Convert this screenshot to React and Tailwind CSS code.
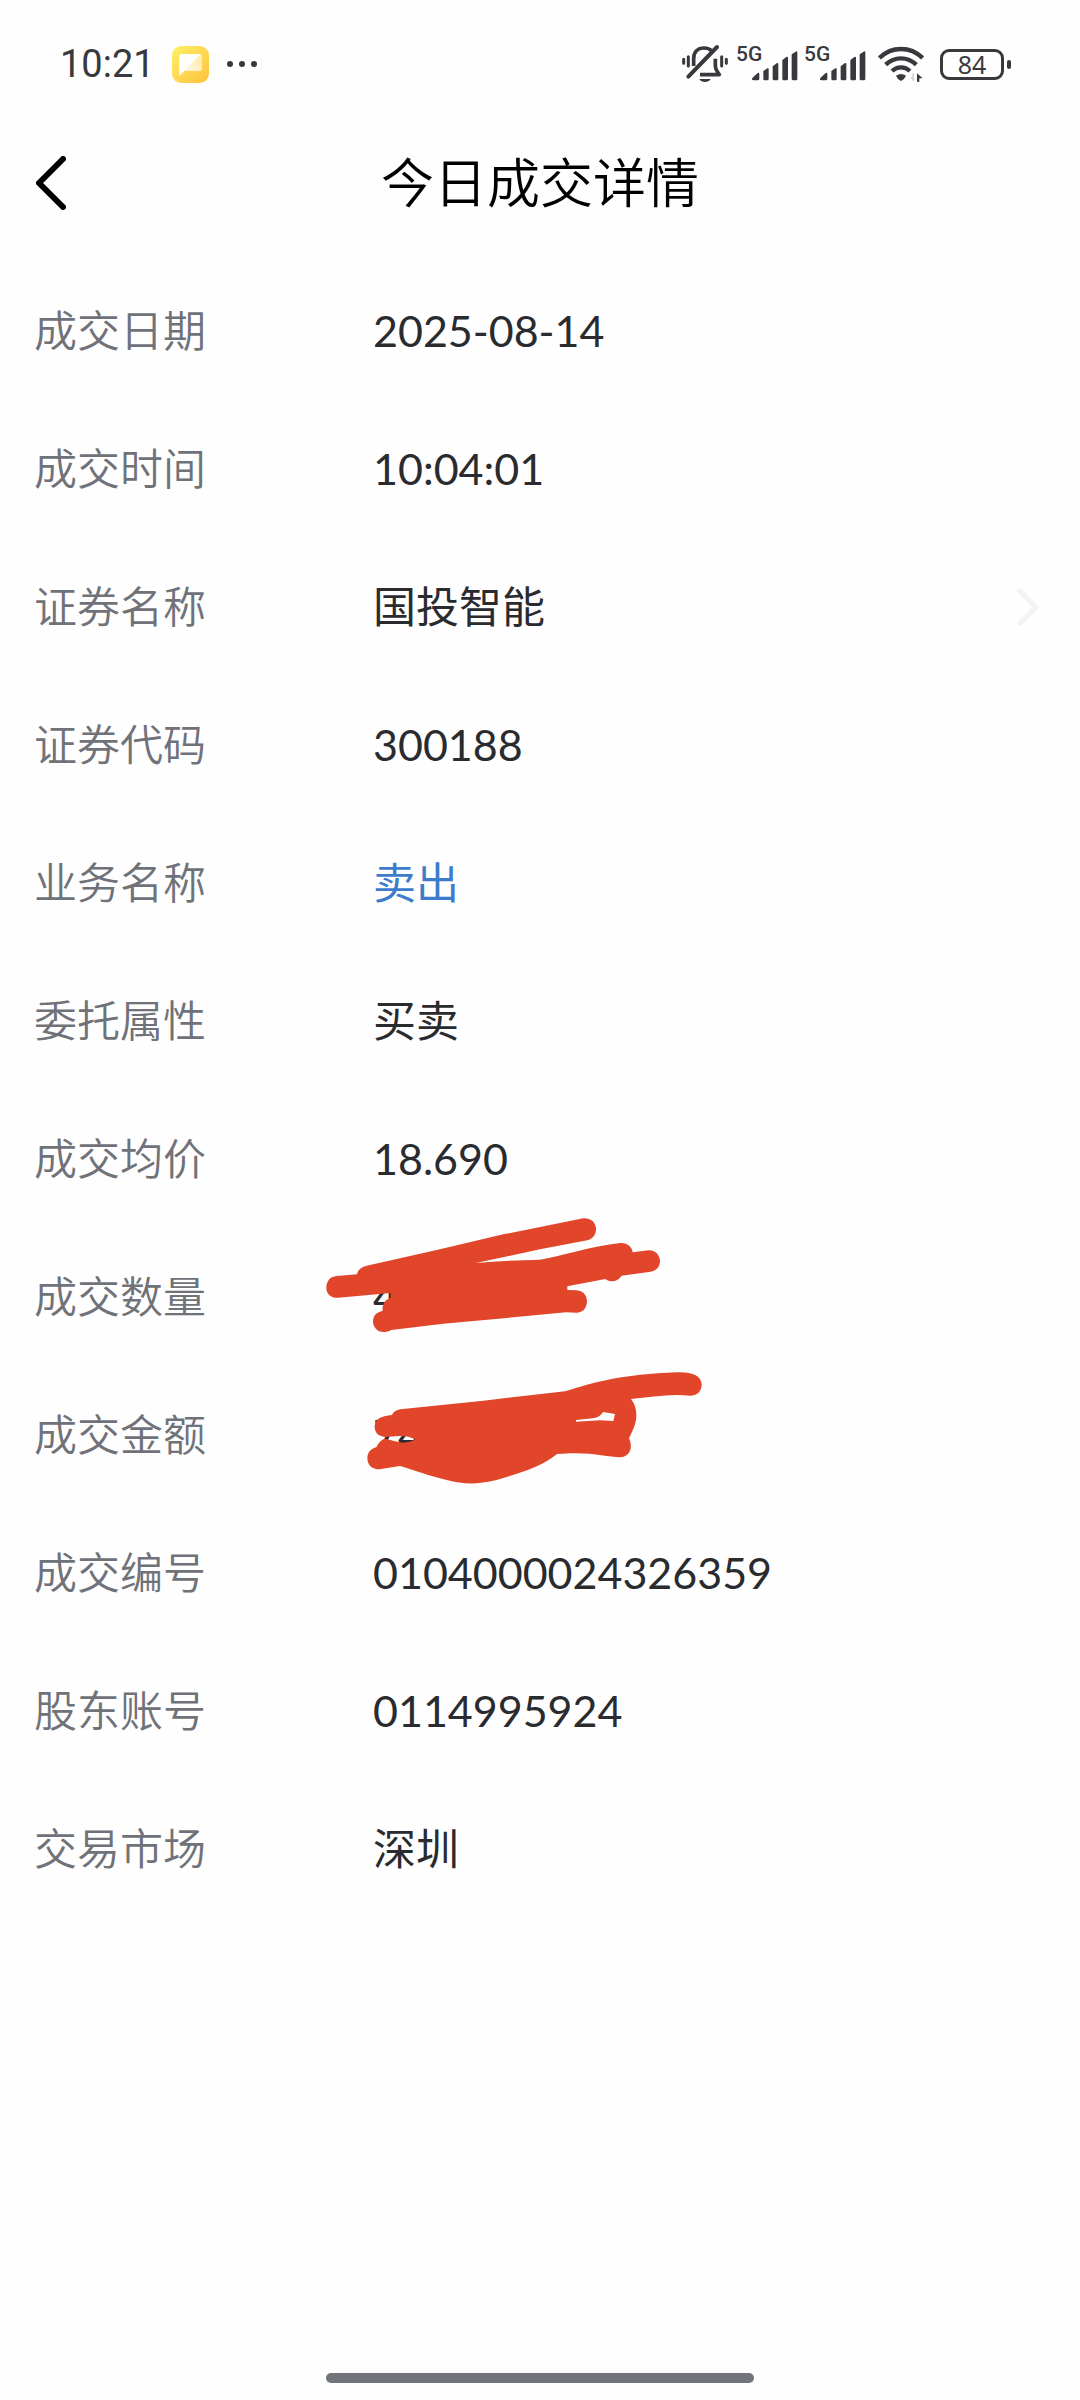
import React from "react";

const rows = [
  { label: "成交日期", value: "2025-08-14" },
  { label: "成交时间", value: "10:04:01" },
  { label: "证券名称", value: "国投智能", link: true },
  { label: "证券代码", value: "300188" },
  { label: "业务名称", value: "卖出", sell: true },
  { label: "委托属性", value: "买卖" },
  { label: "成交均价", value: "18.690" },
  { label: "成交数量", value: "4", mark: "quantity" },
  { label: "成交金额", value: "74", mark: "amount" },
  { label: "成交编号", value: "0104000024326359" },
  { label: "股东账号", value: "0114995924" },
  { label: "交易市场", value: "深圳" },
];

function MutedBell() {
  return (
    <svg width="46" height="40" viewBox="0 0 138 120" fill="none" stroke="#38393d" strokeLinecap="round" aria-label="静音">
      <path d="M35 66V45C35 24 47 12 66 12C76 12 84 15 89 21" strokeWidth="11" strokeLinecap="butt" />
      <path d="M100 44V64C100 75 104 82 112 92H54" strokeWidth="11" strokeLinejoin="round" strokeLinecap="butt" />
      <path d="M19 98L105 9" strokeWidth="12" />
      <path d="M5 46V58M19 38V66M119 38V66M133 46V58" strokeWidth="9" />
      <path d="M52 105H86C82 112 77 114 69 114S56 112 52 105Z" fill="#38393d" stroke="none" />
    </svg>
  );
}

function Signal() {
  return (
    <div className="relative">
      <span className="absolute left-0 top-0 text-[21px] leading-5 font-medium">5G</span>
      <svg width="62" height="40" viewBox="0 0 186 120" fill="#38393d" aria-label="信号">
        <path d="M49 102L65 87Q70 84 70 90V104Q70 109 65 109H53Q45 108 49 102Z" />
        <path d="M82 81L94 73Q98 71 98 76V105Q98 109 94 109H86Q82 109 82 105Z" />
        <path d="M110 67L122 58Q127 55 127 61V105Q127 109 123 109H114Q110 109 110 105Z" />
        <path d="M139 48L151 39Q156 36 156 42V105Q156 109 152 109H143Q139 109 139 105Z" />
        <path d="M167 31L179 23Q184 20 184 26V105Q184 109 180 109H171Q167 109 167 105Z" />
      </svg>
    </div>
  );
}

function Wifi() {
  return (
    <svg width="46" height="36" viewBox="0 0 138 108" fill="none" stroke="#38393d" strokeWidth="13" aria-label="无线网络">
      <path d="M4 36Q32 9 69 9T134 36" />
      <path d="M23 56Q43 37 69 37T115 56" />
      <path d="M42 75Q54 64 69 64T96 75" />
      <path d="M54 89Q69 79 84 89Q79 101 69 105Q59 101 54 89Z" fill="#38393d" stroke="none" />
      <path d="M108 82V107L96 94H103V82Z" fill="#d4d5d7" stroke="none" />
      <path d="M117 107V82L134 97H124V107Z" fill="#38393d" stroke="none" />
    </svg>
  );
}

function Battery() {
  return (
    <div className="flex items-center gap-[3px]">
      <div className="flex h-[31px] w-16 items-center justify-center rounded-[9px] border-[3px] border-[#38393d] font-['Noto_Sans',sans-serif] text-[25px] leading-6">
        84
      </div>
      <div className="h-[9px] w-1 rounded-sm bg-[#38393d]" />
    </div>
  );
}

function NoteIcon() {
  return (
    <svg width="37" height="37" viewBox="0 0 111 111" aria-hidden="true">
      <defs>
        <linearGradient id="note" x1="0" y1="0" x2="1" y2="1">
          <stop offset="0" stopColor="#fff066" />
          <stop offset="1" stopColor="#ffc13d" />
        </linearGradient>
        <linearGradient id="fold" x1="1" y1="0" x2="0.3" y2="1">
          <stop offset="0" stopColor="#fff" stopOpacity="0.45" />
          <stop offset="1" stopColor="#fff" stopOpacity="0.8" />
        </linearGradient>
      </defs>
      <rect width="111" height="111" rx="28" fill="url(#note)" />
      <path d="M27 24H88L22 90V29Q22 24 27 24Z" fill="#fff" />
      <path d="M88 24Q90 24 90 29V69Q90 75 84 75H37Z" fill="url(#fold)" />
    </svg>
  );
}

function Scribble({ kind }) {
  if (kind === "quantity") {
    return (
      <svg className="absolute -left-[63px] -top-7" width="400" height="150" viewBox="0 0 1200 450" fill="#e1462b" aria-hidden="true">
        <path d="M80 228L141 223Q144 203 170 197L380 150L580 103L820 55C846 53 860 72 858 91C856 108 846 117 832 121L690 148L497 189Q590 181 690 179C760 168 830 141 930 129C951 127 967 141 968 157L1015 151C1035 149 1050 165 1050 184C1049 203 1037 213 1022 215L935 227C921 248 900 247 886 237L772 259V270L800 271C821 273 831 287 831 305C830 325 818 337 800 338L768 337L590 354L400 371L244 390C220 403 193 396 189 367C188 346 200 337 218 332C216 312 225 299 242 293V279L85 293C62 295 48 280 49 261C50 242 61 230 80 228Z" />
      </svg>
    );
  }
  return (
    <svg className="absolute -left-[63px] -top-4" width="400" height="150" viewBox="0 450 1200 450" fill="#e1462b" fillRule="evenodd" aria-hidden="true">
      <path d="M246 645Q252 631 271 628L520 602L765 574C850 548 940 522 1100 517C1145 515 1175 527 1175 554C1174 575 1161 587 1140 587C1085 580 1020 591 963 597C978 615 981 638 978 661C974 682 965 697 957 715C969 740 962 770 930 772C890 770 835 753 741 762C695 801 620 822 560 840C500 854 460 853 410 840C355 827 310 810 270 798L208 808C187 808 172 796 172 774C173 756 183 746 199 742C204 729 213 720 224 716C245 720 255 724 270 727C285 730 302 726 316 718C300 710 285 707 266 708L225 711C203 709 193 696 194 678C196 658 211 648 246 645ZM798 660L848 655C864 653 873 646 879 636L915 642L910 663L870 661L798 665Z" />
    </svg>
  );
}

function StatusBar() {
  return (
    <div className="flex h-32 items-center justify-between pl-[60px] pr-[69px] font-[Roboto,sans-serif] text-[#38393d]">
      <div className="flex items-center">
        <span className="text-[38px] leading-10">10:21</span>
        <div className="ml-[17px] mr-[17px]">
          <NoteIcon />
        </div>
        <svg width="32" height="8" viewBox="0 0 32 8" fill="#38393d" aria-hidden="true">
          <circle cx="4" cy="4" r="3" />
          <circle cx="16" cy="4" r="3" />
          <circle cx="28" cy="4" r="3" />
        </svg>
      </div>
      <div className="flex items-center">
        <MutedBell />
        <div className="ml-2 mr-3 flex gap-1.5">
          <Signal />
          <Signal />
        </div>
        <Wifi />
        <div className="ml-4">
          <Battery />
        </div>
      </div>
    </div>
  );
}

export default function App() {
  return (
    <div className="flex min-h-screen flex-col bg-[#fefefe] font-[Lato,'Noto_Sans_CJK_SC',sans-serif]">
      <StatusBar />
      <header className="relative flex h-[110px] items-center justify-center">
        <button type="button" aria-label="返回" className="absolute inset-y-0 left-0 flex items-center pl-9 pr-6">
          <svg width="30" height="54" viewBox="0 0 30 54" fill="none" stroke="#000" strokeWidth="6" strokeLinecap="round" strokeLinejoin="round">
            <path d="M27 3L3 27L27 51" />
          </svg>
        </button>
        <h1 className="text-[53px] leading-[60px] font-[350] text-black">今日成交详情</h1>
      </header>
      <dl className="grow px-[34px] pt-6">
        {rows.map((row) => (
          <div key={row.label} className="flex h-[138px] items-center border-b border-[#fbfbfb] text-[43px] leading-[60px]">
            <dt className="w-[339px] shrink-0 font-[350] text-[#707279]">{row.label}</dt>
            <dd className={row.sell ? "relative flex h-full grow items-center text-[#3c7ccb]" : "relative flex h-full grow items-center text-[#2a2b2e]"}>
              <span>{row.value}</span>
              {row.mark && <Scribble kind={row.mark} />}
              {row.link && (
                <button type="button" aria-label="查看证券" className="ml-auto mr-[7px]">
                  <svg width="22" height="38" viewBox="0 0 22 38" fill="none" stroke="#f2f3f5" strokeWidth="5" strokeLinecap="round" strokeLinejoin="round">
                    <path d="M3 3L19 19L3 35" />
                  </svg>
                </button>
              )}
            </dd>
          </div>
        ))}
      </dl>
      <div className="mx-auto mb-[17px] h-2.5 w-[428px] rounded-full bg-[#71747a]" />
    </div>
  );
}
